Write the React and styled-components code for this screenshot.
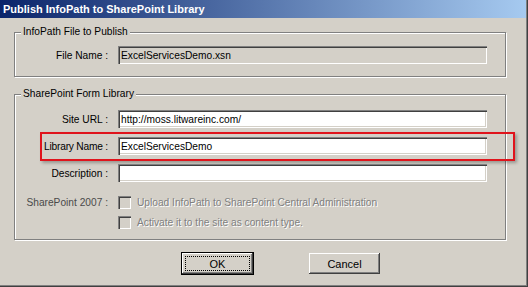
import React from "react";
import styled, { createGlobalStyle, css } from "styled-components";

const GlobalStyle = createGlobalStyle`
  html, body {
    margin: 0;
    padding: 0;
    background: #d4d0c8;
  }
  body {
    font-family: "Liberation Sans", Arial, sans-serif;
    font-size: 10.2px;
    color: #000;
  }
`;

const Window = styled.div`
  width: 528px;
  height: 287px;
  box-sizing: border-box;
  background: #d4d0c8;
  display: flex;
  flex-direction: column;
  box-shadow: inset -1px -1px 0 #404040, inset -2px -2px 0 #808080;
  overflow: hidden;
`;

const TitleBar = styled.div`
  height: 18px;
  flex: none;
  display: flex;
  align-items: center;
  padding-left: 3px;
  background: linear-gradient(to right, #0a246a, #a6caf0);
  color: #fff;
  font-weight: bold;
  font-size: 11px;
  margin-right: 2px;
`;

const Body = styled.div`
  display: flex;
  flex-direction: column;
  padding: 14px 0 0 14px;
`;

const GroupBox = styled.div`
  width: 490px;
  display: flex;
  flex-direction: column;
  border: 1px solid #808080;
  box-shadow: inset 1px 1px 0 #fff, 1px 1px 0 #fff;
  padding: 0 0 ${(p) => p.$bottom}px 0;
  margin-top: ${(p) => p.$top}px;
`;

const GroupTitle = styled.span`
  align-self: flex-start;
  margin: -7px 0 0 6px;
  padding: 0 2px;
  line-height: 12px;
  background: #d4d0c8;
`;

const Rows = styled.div`
  display: flex;
  flex-direction: column;
  gap: 9px;
  margin-top: ${(p) => p.$top}px;
`;

const FieldRow = styled.div`
  position: relative;
  display: grid;
  grid-template-columns: 93px 369px;
  column-gap: 10px;
  align-items: center;

  ${(p) =>
    p.$highlight &&
    css`
      &::before {
        content: "";
        position: absolute;
        left: 25px;
        right: -10px;
        top: -5px;
        bottom: -6px;
        border: 2px solid #e0141c;
        box-shadow: 2px 2px 3px rgba(0, 0, 0, 0.28);
        pointer-events: none;
      }
    `}
`;

const Label = styled.span`
  text-align: right;
  white-space: nowrap;
  letter-spacing: ${(p) => (p.$tight ? "-0.2px" : "0")};
  color: ${(p) => (p.$muted ? "#4a4a4a" : "#000")};
`;

const TextField = styled.div`
  height: 18px;
  box-sizing: border-box;
  display: flex;
  align-items: center;
  padding: 1px 3px 0;
  background: ${(p) => (p.$readOnly ? "#d4d0c8" : "#fff")};
  box-shadow: inset 1px 1px 0 #808080, inset 2px 2px 0 #404040,
    inset -1px -1px 0 #fff, inset -2px -2px 0 #d4d0c8;
  white-space: nowrap;
`;

const OptionRow = styled.div`
  display: grid;
  grid-template-columns: 93px 369px;
  column-gap: 10px;
  align-items: center;
  margin-top: ${(p) => p.$top}px;
`;

const Option = styled.div`
  display: flex;
  align-items: center;
  gap: 6px;
`;

const CheckBox = styled.span`
  width: 13px;
  height: 13px;
  flex: none;
  box-sizing: border-box;
  background: #d4d0c8;
  box-shadow: inset 1px 1px 0 #808080, inset 2px 2px 0 #404040,
    inset -1px -1px 0 #fff, inset -2px -2px 0 #d4d0c8;
`;

const DisabledText = styled.span`
  color: #808080;
  text-shadow: 1px 1px 0 #fff;
  white-space: nowrap;
`;

const ButtonRow = styled.div`
  display: flex;
  gap: 56px;
  padding-left: 168px;
  margin-top: 13px;
`;

const Button = styled.div`
  width: 71px;
  height: 21px;
  box-sizing: border-box;
  display: flex;
  padding: 3px;
  background: #d4d0c8;
  box-shadow: inset -1px -1px 0 #404040, inset 1px 1px 0 #fff,
    inset -2px -2px 0 #808080;
  outline: ${(p) => (p.$default ? "1px solid #000" : "none")};
`;

const ButtonFace = styled.span`
  flex: 1;
  display: flex;
  align-items: center;
  justify-content: center;
  border: 1px dotted ${(p) => (p.$focused ? "#000" : "transparent")};
  font-size: 11px;
`;

export default function App() {
  return (
    <>
      <GlobalStyle />
      <Window>
        <TitleBar>Publish InfoPath to SharePoint Library</TitleBar>
        <Body>
          <GroupBox $top={0} $bottom={12}>
            <GroupTitle>InfoPath File to Publish</GroupTitle>
            <Rows $top={8}>
              <FieldRow>
                <Label>File Name :</Label>
                <TextField $readOnly>ExcelServicesDemo.xsn</TextField>
              </FieldRow>
            </Rows>
          </GroupBox>

          <GroupBox $top={17} $bottom={10}>
            <GroupTitle>SharePoint Form Library</GroupTitle>
            <Rows $top={10}>
              <FieldRow>
                <Label>Site URL :</Label>
                <TextField>http://moss.litwareinc.com/</TextField>
              </FieldRow>
              <FieldRow $highlight>
                <Label $tight>Library Name :</Label>
                <TextField>ExcelServicesDemo</TextField>
              </FieldRow>
              <FieldRow>
                <Label>Description :</Label>
                <TextField />
              </FieldRow>
            </Rows>
            <OptionRow $top={14}>
              <Label $muted>SharePoint 2007 :</Label>
              <Option>
                <CheckBox />
                <DisabledText>
                  Upload InfoPath to SharePoint Central Administration
                </DisabledText>
              </Option>
            </OptionRow>
            <OptionRow $top={7}>
              <span />
              <Option>
                <CheckBox />
                <DisabledText>Activate it to the site as content type.</DisabledText>
              </Option>
            </OptionRow>
          </GroupBox>

          <ButtonRow>
            <Button $default>
              <ButtonFace $focused>OK</ButtonFace>
            </Button>
            <Button>
              <ButtonFace>Cancel</ButtonFace>
            </Button>
          </ButtonRow>
        </Body>
      </Window>
    </>
  );
}
